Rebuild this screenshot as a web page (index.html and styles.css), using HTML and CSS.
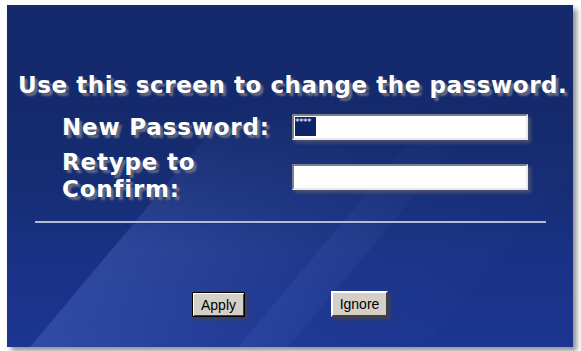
FILE: index.html
```html
<!DOCTYPE html>
<html>
<head>
<meta charset="utf-8">
<link rel="stylesheet" href="styles.css">
</head>
<body>
<div class="panel">
  <h1 class="title">Use this screen to change the password.</h1>
  <div class="form">
    <div class="label">New Password:</div>
    <div class="field first"><span class="sel">****</span></div>
    <div class="label two">Retype to<br>Confirm:</div>
    <div class="field second"></div>
  </div>
  <div class="rule"></div>
  <div class="buttons">
    <button class="btn default">Apply</button>
    <button class="btn plain">Ignore</button>
  </div>
</div>
</body>
</html>
```

FILE: styles.css
```css
html, body {
  margin: 0;
  padding: 0;
  background: #ffffff;
}
body {
  width: 581px;
  height: 351px;
  overflow: hidden;
}
.panel {
  margin: 5px 0 0 7px;
  width: 566px;
  height: 342px;
  box-sizing: border-box;
  padding-top: 67px;
  background:
    linear-gradient(180deg, #152a6c 0px, #152a6c 100px, rgba(21,42,108,0) 245px),
    linear-gradient(130deg,
      rgba(120,150,240,0) 0px, rgba(120,150,240,0) 237px,
      rgba(120,150,240,0.22) 238px, rgba(120,150,240,0.07) 396px,
      rgba(120,150,240,0.15) 398px, rgba(120,150,240,0.10) 434px,
      rgba(120,150,240,0.04) 436px, rgba(120,150,240,0.02) 538px,
      rgba(120,150,240,0) 540px),
    linear-gradient(180deg, #152a6c 0%, #18307f 60%, #1c3591 100%);
  box-shadow: 4px 4px 5px rgba(60,60,70,0.55);
  font-family: "DejaVu Sans", Verdana, sans-serif;
  color: #ffffff;
}
.title {
  margin: 0;
  padding-left: 11px;
  font-size: 23px;
  line-height: 26px;
  letter-spacing: 0.55px;
  font-weight: bold;
  white-space: nowrap;
  text-shadow: 3px 3px 2px rgba(110,115,135,0.9);
}
.form {
  margin: 16px 0 0 55px;
  display: grid;
  grid-template-columns: 230px 236px;
  row-gap: 9px;
  align-items: start;
}
.label {
  font-size: 23px;
  line-height: 26px;
  letter-spacing: 0.8px;
  font-weight: bold;
  white-space: nowrap;
  text-shadow: 3px 3px 2px rgba(110,115,135,0.9);
}
.label.two {
  line-height: 27px;
}
.field {
  height: 26px;
  box-sizing: border-box;
  background: #ffffff;
  border: 2px solid;
  border-color: #7a7f90 #e8e8ee #e8e8ee #7a7f90;
  box-shadow: 3px 3px 3px rgba(80,85,110,0.85);
  padding: 1px 0 0 1px;
  font-family: "DejaVu Sans", sans-serif;
}
.field.second {
  margin-top: 15px;
}
.sel {
  display: block;
  width: 21px;
  height: 19px;
  background: #0e2268;
  color: #ffffff;
  font-size: 9px;
  line-height: 11px;
  letter-spacing: -0.5px;
}
.rule {
  margin: 18px 0 0 28px;
  width: 511px;
  height: 2px;
  background: #b4bdd6;
  box-shadow: 1px 1px 1px rgba(40,50,90,0.6);
}
.buttons {
  display: flex;
  align-items: flex-start;
  gap: 86px;
  margin: 68px 0 0 185px;
}
.btn {
  font-family: "Liberation Sans", Arial, sans-serif;
  font-size: 14px;
  color: #000000;
  background: #d4d0c8;
  padding: 0;
  cursor: default;
  box-sizing: border-box;
}
.btn.default {
  width: 53px;
  height: 25px;
  margin-top: 1px;
  border: 1px solid #000000;
  outline: none;
  box-shadow: inset 1px 1px 0 #ffffff, inset -1px -1px 0 #404040, 3px 3px 3px rgba(60,65,90,0.9);
}
.btn.plain {
  width: 57px;
  height: 26px;
  border: 2px solid;
  border-color: #ffffff #404040 #404040 #ffffff;
  box-shadow: 3px 3px 3px rgba(60,65,90,0.9);
}
```
